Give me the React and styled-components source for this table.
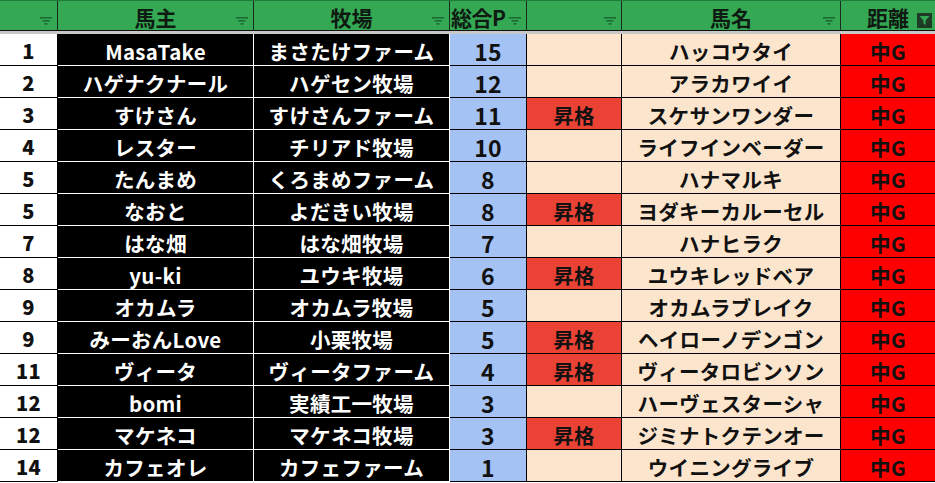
import React from 'react';
import styled, { createGlobalStyle, css } from 'styled-components';

const GlobalStyle = createGlobalStyle`
  html, body {
    margin: 0;
    padding: 0;
    background: #ffffff;
  }
  body {
    font-family: "Noto Sans CJK JP", "Noto Sans", sans-serif;
    overflow: hidden;
  }
`;

const COLS = '58px 196px 196px 77px 95px 219px 94px';

const Sheet = styled.div`
  width: 935px;
  height: 483px;
  overflow: hidden;
  background: #ffffff;
`;

const HeaderRow = styled.div`
  display: grid;
  grid-template-columns: ${COLS};
  height: 31px;
  background: #34a853;
  border-top: 1px solid #1f7a3a;
  box-sizing: border-box;
  border-bottom: 1px solid #111;
`;

const HeadCell = styled.div`
  position: relative;
  display: flex;
  align-items: center;
  justify-content: ${({ $left }) => ($left ? 'flex-start' : 'center')};
  padding-left: ${({ $left }) => ($left ? '1px' : '0')};
  border-right: 1px solid #1a2a1e;
  font-size: 21px;
  font-weight: 700;
  color: #0e1a12;
  line-height: 1;
  padding-top: 4px;
  letter-spacing: ${({ $left }) => ($left ? '-0.5px' : '0')};
  &:last-child {
    border-right: none;
  }
`;

const FilterMark = styled.svg`
  position: absolute;
  right: 5px;
  bottom: 5px;
`;

const ActiveFilter = styled.div`
  position: absolute;
  right: 3px;
  bottom: 2px;
  width: 15px;
  height: 15px;
  background: #1d3b25;
  display: flex;
  align-items: center;
  justify-content: center;
`;

const Divider = styled.div`
  height: 3px;
  background: #c8c8c8;
`;

const Row = styled.div`
  display: grid;
  grid-template-columns: ${COLS};
  height: 32px;
`;

const cellTones = {
  rank: css`
    background: #ffffff;
    color: #111;
    border-bottom-color: #000;
    font-size: 20px;
    font-weight: 800;
  `,
  dark: css`
    background: #000000;
    color: #ffffff;
    border-bottom-color: #ffffff;
    border-right-color: #ffffff;
  `,
  point: css`
    background: #a4c2f4;
    color: #111;
    font-size: 23px;
    font-weight: 700;
  `,
  empty: css`
    background: #fce5cd;
    color: #111;
  `,
  up: css`
    background: #ea4335;
    color: #111;
  `,
  horse: css`
    background: #fce5cd;
    color: #111;
  `,
  dist: css`
    background: #ff0000;
    color: #111;
  `,
};

const Cell = styled.div`
  display: flex;
  align-items: center;
  justify-content: center;
  box-sizing: border-box;
  border-right: 1px solid #000;
  border-bottom: 1px solid #000;
  font-size: 20.5px;
  font-weight: 700;
  line-height: 1;
  padding-top: 3px;
  white-space: nowrap;
  letter-spacing: 0.3px;
  ${({ $tone }) => cellTones[$tone]}
  &:last-child {
    border-right: none;
  }
`;

const rows = [
  ['1', 'MasaTake', 'まさたけファーム', '15', false, 'ハッコウタイ'],
  ['2', 'ハゲナクナール', 'ハゲセン牧場', '12', false, 'アラカワイイ'],
  ['3', 'すけさん', 'すけさんファーム', '11', true, 'スケサンワンダー'],
  ['4', 'レスター', 'チリアド牧場', '10', false, 'ライフインベーダー'],
  ['5', 'たんまめ', 'くろまめファーム', '8', false, 'ハナマルキ'],
  ['5', 'なおと', 'よだきい牧場', '8', true, 'ヨダキーカルーセル'],
  ['7', 'はな畑', 'はな畑牧場', '7', false, 'ハナヒラク'],
  ['8', 'yu-ki', 'ユウキ牧場', '6', true, 'ユウキレッドベア'],
  ['9', 'オカムラ', 'オカムラ牧場', '5', false, 'オカムラブレイク'],
  ['9', 'みーおんLove', '小栗牧場', '5', true, 'ヘイローノデンゴン'],
  ['11', 'ヴィータ', 'ヴィータファーム', '4', true, 'ヴィータロビンソン'],
  ['12', 'bomi', '実績工一牧場', '3', false, 'ハーヴェスターシャ'],
  ['12', 'マケネコ', 'マケネコ牧場', '3', true, 'ジミナトクテンオー'],
  ['14', 'カフェオレ', 'カフェファーム', '1', false, 'ウイニングライブ'],
];

const headers = ['', '馬主', '牧場', '総合P', '', '馬名', '距離'];

function Filter() {
  return (
    <FilterMark width="12" height="8" viewBox="0 0 12 8">
      <rect x="0" y="0" width="12" height="1.6" fill="#1c6b34" />
      <rect x="2.5" y="3" width="7" height="1.6" fill="#1c6b34" />
      <rect x="4.5" y="6" width="3" height="1.6" fill="#1c6b34" />
    </FilterMark>
  );
}

function Funnel() {
  return (
    <ActiveFilter>
      <svg width="11" height="11" viewBox="0 0 11 11">
        <path d="M0.5 1 H10.5 L6.6 5.4 V10 L4.4 8.6 V5.4 Z" fill="#34a853" />
      </svg>
    </ActiveFilter>
  );
}

export default function App() {
  return (
    <>
      <GlobalStyle />
      <Sheet>
        <HeaderRow>
          {headers.map((h, i) => (
            <HeadCell key={i} $left={h === '総合P'}>
              {h}
              {i === headers.length - 1 ? <Funnel /> : <Filter />}
            </HeadCell>
          ))}
        </HeaderRow>
        <Divider />
        {rows.map(([rank, owner, farm, pts, up, horse], i) => (
          <Row key={i}>
            <Cell $tone="rank">{rank}</Cell>
            <Cell $tone="dark">{owner}</Cell>
            <Cell $tone="dark">{farm}</Cell>
            <Cell $tone="point">{pts}</Cell>
            <Cell $tone={up ? 'up' : 'empty'}>{up ? '昇格' : ''}</Cell>
            <Cell $tone="horse">{horse}</Cell>
            <Cell $tone="dist">中G</Cell>
          </Row>
        ))}
      </Sheet>
    </>
  );
}
